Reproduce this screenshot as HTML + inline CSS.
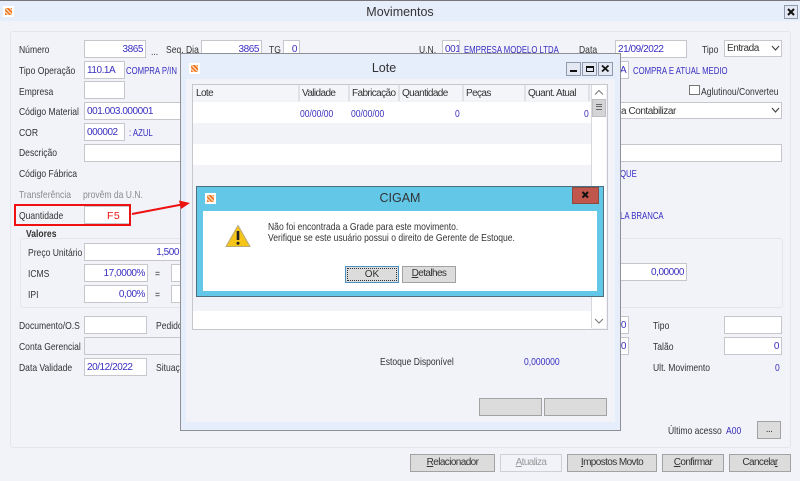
<!DOCTYPE html>
<html><head><meta charset="utf-8">
<style>
html,body{margin:0;padding:0;background:#f1f3f9}
#r{position:relative;width:800px;height:481px;overflow:hidden;background:#f1f3f9;font:9.5px "Liberation Sans",sans-serif;color:#333;filter:blur(.3px)}
#r div,#r span.a{position:absolute;box-sizing:border-box}
.t{white-space:nowrap;line-height:12px;height:12px;margin-top:1px;font-size:10.5px;transform:scaleX(.815);transform-origin:left center}
.c{transform:scaleX(.74)}
.n{transform:none}
.b{color:#3a2fc0}
.i{background:#fff;border:1.5px solid #c6c6cc;white-space:nowrap;color:#3a2fc0;font-size:10px;line-height:17px;padding:0 2px;overflow:hidden;letter-spacing:-.45px}
.r{text-align:right}
.btn{background:#dcdcdc;border:1.5px solid #a2a2a2;text-align:center;font-size:10px;line-height:15px;color:#333;white-space:nowrap;letter-spacing:-.6px}
.ic{width:11px;height:11px;background:#fff}
.ic:after{content:"";position:absolute;left:2px;top:2px;width:7px;height:7px;background:repeating-linear-gradient(45deg,#f07a28 0 1.5px,#fbd0a8 1.5px 3px)}
.wb{background:#e4e8f2;border:1px solid #8f9aae;width:15px;height:14px;color:#000}
.h{font-size:10px;line-height:17px;height:16px;padding-left:2px;border-right:2px solid #e0e0e6;color:#333;top:0;white-space:nowrap;letter-spacing:-.6px}
u{text-decoration:underline}
</style></head><body>
<div id="r">
<div style="left:0;top:0;width:800px;height:1px;background:#777"></div>
<div style="left:0;top:1px;width:800px;height:20px;background:#e6edfb"></div>
<div class="ic" style="left:3px;top:6px"></div>
<div class="t n" style="left:0;width:800px;top:4px;height:15px;line-height:15px;text-align:center;font-size:12.5px;color:#333">Movimentos</div>
<div class="wb" style="left:784px;top:5px;width:14px;height:14px"><svg width="12" height="12" style="position:absolute;left:0;top:0"><path d="M3 3L9 9M9 3L3 9" stroke="#111" stroke-width="2"/></svg></div>

<div style="left:10px;top:31px;width:781px;height:417px;border:1px solid #e4e6ec;border-radius:3px"></div>

<div class="t" style="left:19px;top:43px">Número</div>
<div class="i r" style="left:84px;top:40px;width:62px;height:18px">3865</div>
<div class="t" style="left:151px;top:45px">...</div>
<div class="t" style="left:166px;top:43px">Seq. Dia</div>
<div class="i r" style="left:201px;top:40px;width:61px;height:18px">3865</div>
<div class="t" style="left:269px;top:43px">TG</div>
<div class="i r" style="left:283px;top:40px;width:17px;height:18px">0</div>
<div class="t" style="left:419px;top:43px">U.N.</div>
<div class="i" style="left:442px;top:40px;width:18px;height:18px">001</div>
<div class="t b c" style="left:464px;top:43px">EMPRESA MODELO LTDA</div>
<div class="t" style="left:579px;top:43px">Data</div>
<div class="i" style="left:615px;top:40px;width:72px;height:18px">21/09/2022</div>
<div class="t" style="left:702px;top:43px">Tipo</div>
<div class="i" style="left:724px;top:40px;width:58px;height:17px;color:#333;line-height:15px">Entrada</div>
<svg class="a" style="position:absolute;left:771px;top:45px" width="9" height="7"><path d="M1 1L4.5 5L8 1" fill="none" stroke="#444" stroke-width="1.2"/></svg>

<div class="t" style="left:19px;top:64px">Tipo Operação</div>
<div class="i" style="left:84px;top:61px;width:41px;height:18px">110.1A</div>
<div class="t b c" style="left:126px;top:64px">COMPRA P/IN</div>
<div class="i" style="left:610px;top:61px;width:19px;height:18px">&nbsp;&nbsp;&nbsp;A</div>
<div class="t b c" style="left:633px;top:64px">COMPRA E ATUAL MEDIO</div>

<div class="t" style="left:19px;top:85px">Empresa</div>
<div class="i" style="left:84px;top:81px;width:41px;height:18px"></div>
<div style="left:689px;top:85px;width:11px;height:10px;background:#fff;border:1px solid #777"></div>
<div class="t" style="left:701px;top:85px">Aglutinou/Converteu</div>

<div class="t" style="left:19px;top:105px">Código Material</div>
<div class="i" style="left:84px;top:102px;width:110px;height:18px">001.003.000001</div>
<div class="i" style="left:600px;top:102px;width:182px;height:17px;color:#333;padding-left:20px">a Contabilizar</div>
<svg style="position:absolute;left:771px;top:107px" width="9" height="7"><path d="M1 1L4.5 5L8 1" fill="none" stroke="#444" stroke-width="1.2"/></svg>

<div class="t" style="left:19px;top:126px">COR</div>
<div class="i" style="left:84px;top:123px;width:41px;height:18px">000002</div>
<div class="t b c" style="left:129px;top:126px">: AZUL</div>

<div class="t" style="left:19px;top:146px">Descrição</div>
<div class="i" style="left:84px;top:144px;width:110px;height:18px"></div>
<div class="i" style="left:600px;top:144px;width:182px;height:18px"></div>

<div class="t" style="left:19px;top:167px">Código Fábrica</div>
<div class="t b c" style="left:620px;top:167px">QUE</div>
<div class="t" style="left:19px;top:188px;color:#8a8a8a">Transferência</div>
<div class="t" style="left:83px;top:188px;color:#8a8a8a">provêm da U.N.</div>

<div class="t" style="left:19px;top:209px">Quantidade</div>
<div class="i" style="left:84px;top:206px;width:46px;height:18px"></div>
<div class="t b c" style="left:620px;top:209px">LA BRANCA</div>

<div style="left:20px;top:238px;width:763px;height:70px;border:1px solid #e4e6ec;border-radius:3px"></div>
<div class="t" style="left:26px;top:227px;font-weight:bold;color:#333">Valores</div>
<div class="t" style="left:28px;top:246px">Preço Unitário</div>
<div class="i r" style="left:84px;top:243px;width:110px;height:18px;padding-right:14px">1,500</div>
<div class="t" style="left:28px;top:267px">ICMS</div>
<div class="i r" style="left:84px;top:264px;width:64px;height:18px">17,0000%</div>
<div class="t" style="left:155px;top:267px">=</div>
<div class="i" style="left:171px;top:264px;width:20px;height:18px"></div>
<div class="t" style="left:28px;top:288px">IPI</div>
<div class="i r" style="left:84px;top:285px;width:64px;height:18px">0,00%</div>
<div class="t" style="left:155px;top:288px">=</div>
<div class="i" style="left:171px;top:285px;width:20px;height:18px"></div>
<div class="i r" style="left:600px;top:263px;width:87px;height:18px">0,00000</div>

<div class="t" style="left:19px;top:319px">Documento/O.S</div>
<div class="i" style="left:84px;top:316px;width:63px;height:18px"></div>
<div class="t" style="left:156px;top:319px">Pedido</div>
<div class="t" style="left:19px;top:340px">Conta Gerencial</div>
<div class="i" style="left:84px;top:337px;width:110px;height:18px;background:#f1f3f9"></div>
<div class="t" style="left:19px;top:361px">Data Validade</div>
<div class="i" style="left:84px;top:358px;width:63px;height:18px">20/12/2022</div>
<div class="t" style="left:156px;top:361px">Situaç</div>

<div class="i r" style="left:610px;top:316px;width:19px;height:18px">0</div>
<div class="i r" style="left:610px;top:337px;width:19px;height:18px">0</div>
<div class="t" style="left:653px;top:319px">Tipo</div>
<div class="i" style="left:724px;top:316px;width:58px;height:18px"></div>
<div class="t" style="left:653px;top:340px">Talão</div>
<div class="i r" style="left:724px;top:337px;width:58px;height:18px">0</div>
<div class="t" style="left:653px;top:361px">Ult. Movimento</div>
<div class="t b" style="left:775px;top:361px">0</div>
<div class="t" style="left:668px;top:424px">Último acesso</div>
<div class="t b" style="left:726px;top:424px">A00</div>
<div class="btn" style="left:757px;top:421px;width:24px;height:18px">...</div>

<div class="btn" style="left:410px;top:454px;width:85px;height:18px"><u>R</u>elacionador</div>
<div class="btn" style="left:500px;top:454px;width:62px;height:18px;background:#f1f3f9;border-color:#d0d0d4;color:#999"><u>A</u>tualiza</div>
<div class="btn" style="left:567px;top:454px;width:90px;height:18px"><u>I</u>mpostos Movto</div>
<div class="btn" style="left:662px;top:454px;width:62px;height:18px"><u>C</u>onfirmar</div>
<div class="btn" style="left:729px;top:454px;width:62px;height:18px">Cancela<u>r</u></div>

<!-- Lote -->
<div style="left:180px;top:53px;width:441px;height:378px;background:#e6edfb;border:1.5px solid #8e9096">
 <div style="left:5px;top:25px;width:429px;height:343px;background:#f1f3f9"></div>
</div>
<div class="ic" style="left:189px;top:63px"></div>
<div class="t n" style="left:180px;width:408px;top:60px;height:15px;line-height:15px;text-align:center;font-size:12.5px">Lote</div>
<div class="wb" style="left:566px;top:62px"><div style="left:3px;top:7px;width:7px;height:2px;background:#111"></div></div>
<div class="wb" style="left:582px;top:62px"><div style="left:3px;top:3px;width:8px;height:6px;border:1.5px solid #111;border-top-width:2px"></div></div>
<div class="wb" style="left:598px;top:62px"><svg width="13" height="12" style="position:absolute;left:0;top:0"><path d="M3 2.5L9.5 8.5M9.5 2.5L3 8.5" stroke="#111" stroke-width="1.8"/></svg></div>

<div style="left:192px;top:84px;width:416px;height:246px;background:#f1f3f9;border:1.5px solid #c6c6cc">
 <div style="left:0;top:0;width:398px;height:16px;background:#f4f5f9">
  <div class="h" style="left:1px;width:106px">Lote</div>
  <div class="h" style="left:107px;width:50px">Validade</div>
  <div class="h" style="left:157px;width:50px">Fabricação</div>
  <div class="h" style="left:207px;width:64px">Quantidade</div>
  <div class="h" style="left:271px;width:62px">Peças</div>
  <div class="h" style="left:333px;width:64px">Quant. Atual</div>
 </div>
 <div style="left:0;top:17px;width:398px;height:21px;background:#fff"></div>
 <div style="left:0;top:59px;width:398px;height:21px;background:#fff"></div>
 <div style="left:0;top:226px;width:398px;height:18px;background:#fff"></div>
 <div class="t b" style="left:107px;top:22px">00/00/00</div>
 <div class="t b" style="left:158px;top:22px">00/00/00</div>
 <div class="t b" style="left:262px;top:22px">0</div>
 <div class="t b" style="left:391px;top:22px">0</div>
 <div style="left:398px;top:0;width:15px;height:243px;background:#fff;border-left:1px solid #d8d8dc">
   <svg style="position:absolute;left:2px;top:4px" width="10" height="8"><path d="M1 5.5L5 1.5L9 5.5" fill="none" stroke="#777"/></svg>
   <div style="left:0;top:14px;width:14px;height:18px;background:#d4d4d6;border:1px solid #c0c0c4"></div>
   <div style="left:4px;top:19px;width:6px;height:6px;border-top:1px solid #666;border-bottom:1px solid #666"></div>
   <div style="left:4px;top:21px;width:6px;height:1px;background:#666"></div>
   <svg style="position:absolute;left:2px;top:232px" width="10" height="8"><path d="M1 2L5 6L9 2" fill="none" stroke="#777"/></svg>
 </div>
</div>
<div class="t" style="left:380px;top:355px">Estoque Disponível</div>
<div class="t b" style="left:524px;top:355px">0,000000</div>
<div class="btn" style="left:479px;top:398px;width:63px;height:18px"></div>
<div class="btn" style="left:544px;top:398px;width:63px;height:18px"></div>

<!-- CIGAM -->
<div style="left:196px;top:186px;width:408px;height:111px;background:#63c8e8;border:1px solid #4e6f7e"></div>
<div style="left:203px;top:211px;width:394px;height:80px;background:#fff"></div>
<div class="ic" style="left:205px;top:193px"></div>
<div class="t n" style="left:196px;width:408px;top:190px;height:15px;line-height:15px;text-align:center;font-size:12.5px">CIGAM</div>
<div style="left:572px;top:187px;width:27px;height:17px;background:#c0564c;border:1px solid #8a4a44"><svg width="25" height="15" style="position:absolute;left:0;top:0"><path d="M9.5 4L15 9.5M15 4L9.5 9.5" stroke="#111" stroke-width="2"/></svg></div>
<svg style="position:absolute;left:225px;top:224px" width="26" height="24"><path d="M13 1.5L25 22.5H1Z" fill="#f5c518" stroke="#b9a878"/><path d="M13 7V16" stroke="#222" stroke-width="2.6"/><circle cx="13" cy="19.3" r="1.5" fill="#222"/></svg>
<div class="t" style="left:268px;top:220px;color:#333">Não foi encontrada a Grade para este movimento.</div>
<div class="t" style="left:268px;top:231px;color:#333">Verifique se este usuário possui o direito de Gerente de Estoque.</div>
<div style="left:345px;top:266px;width:54px;height:17px;background:#dcdcdc;border:1px solid #4d94c4;text-align:center;line-height:15px;color:#333;outline:1px dotted #333;outline-offset:-3px;font-size:10px">OK</div>
<div class="btn" style="left:402px;top:266px;width:54px;height:17px;line-height:14px"><u>D</u>etalhes</div>

<!-- red annotation -->
<div style="left:14px;top:204px;width:117px;height:22px;border:2px solid #ee1111"></div>
<div class="t n" style="left:107px;top:209px;color:#ee1111;font-size:10.5px;height:13px;line-height:13px;letter-spacing:.5px">F5</div>
<svg style="position:absolute;left:130px;top:195px" width="65" height="25"><path d="M2 19L52 9.5" stroke="#ee1111" stroke-width="2"/><path d="M60 8L49 5.5L51 14Z" fill="#ee1111"/></svg>
</div>
</body></html>
